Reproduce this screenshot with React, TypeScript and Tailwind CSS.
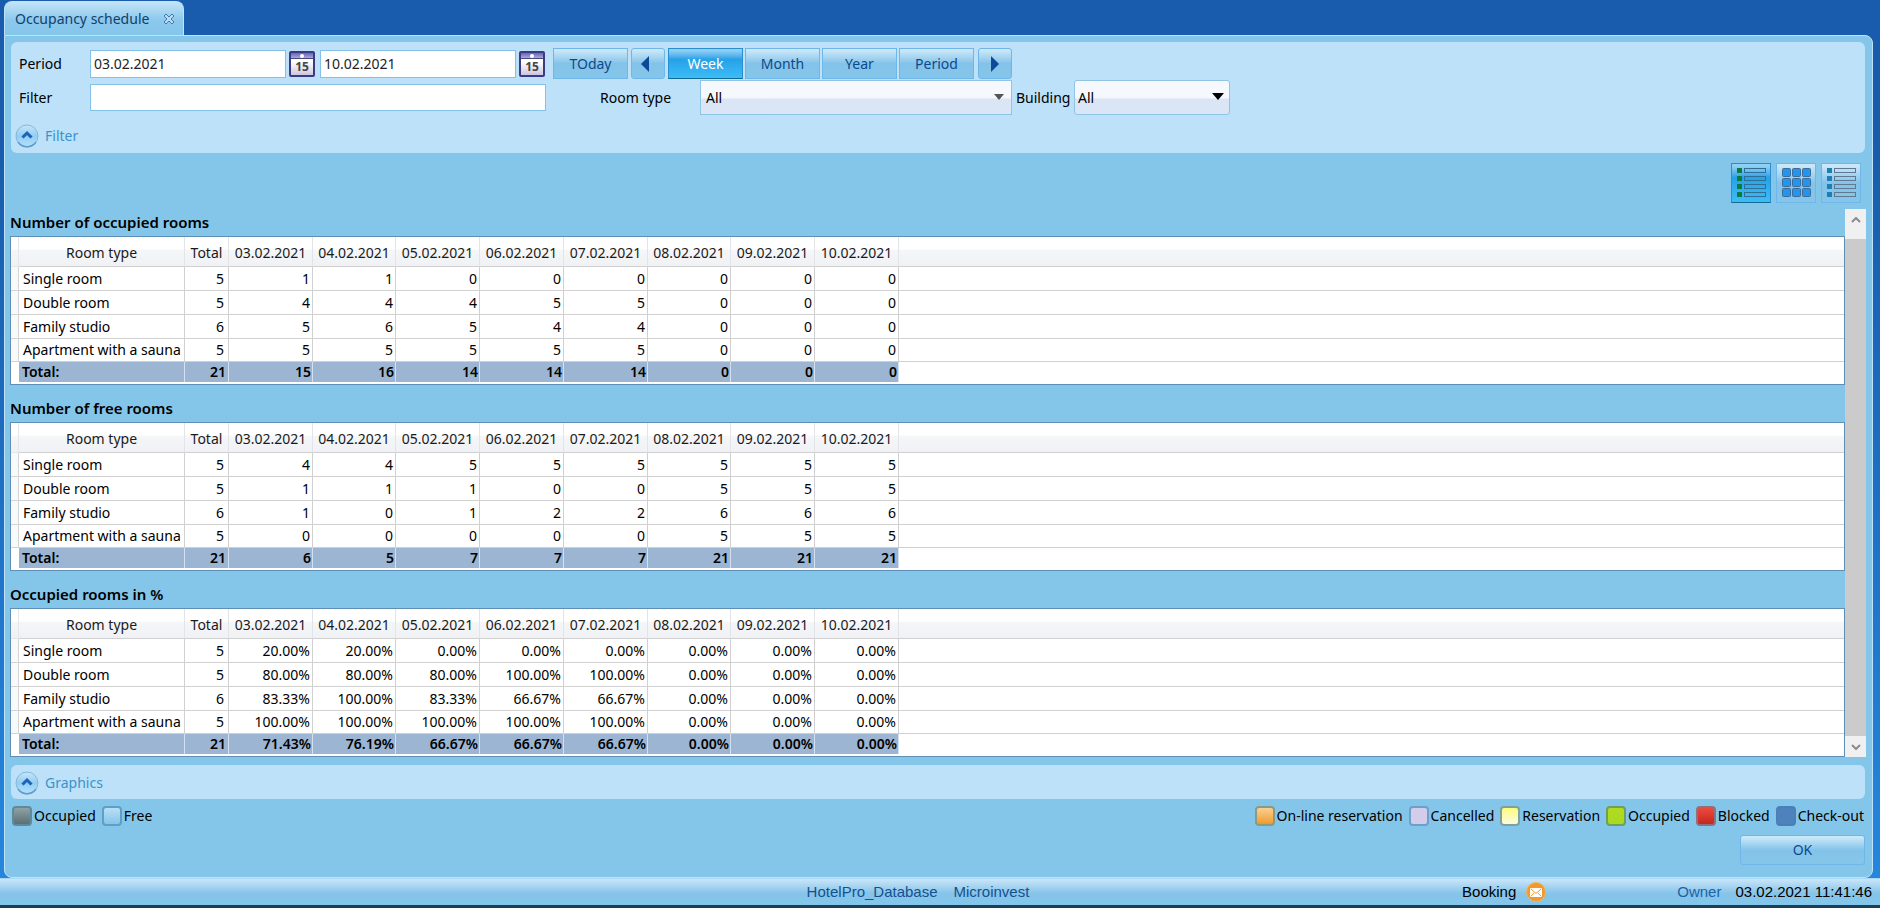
import { useState, type ReactNode } from "react";
import { clsx } from "clsx";

const dates = [
  "03.02.2021",
  "04.02.2021",
  "05.02.2021",
  "06.02.2021",
  "07.02.2021",
  "08.02.2021",
  "09.02.2021",
  "10.02.2021",
];

type Row = { name: string; total: number; values: string[] };

const sections: { title: string; rows: Row[]; totals: string[] }[] = [
  {
    title: "Number of occupied rooms",
    rows: [
      { name: "Single room", total: 5, values: ["1", "1", "0", "0", "0", "0", "0", "0"] },
      { name: "Double room", total: 5, values: ["4", "4", "4", "5", "5", "0", "0", "0"] },
      { name: "Family studio", total: 6, values: ["5", "6", "5", "4", "4", "0", "0", "0"] },
      { name: "Apartment with a sauna", total: 5, values: ["5", "5", "5", "5", "5", "0", "0", "0"] },
    ],
    totals: ["15", "16", "14", "14", "14", "0", "0", "0"],
  },
  {
    title: "Number of free rooms",
    rows: [
      { name: "Single room", total: 5, values: ["4", "4", "5", "5", "5", "5", "5", "5"] },
      { name: "Double room", total: 5, values: ["1", "1", "1", "0", "0", "5", "5", "5"] },
      { name: "Family studio", total: 6, values: ["1", "0", "1", "2", "2", "6", "6", "6"] },
      { name: "Apartment with a sauna", total: 5, values: ["0", "0", "0", "0", "0", "5", "5", "5"] },
    ],
    totals: ["6", "5", "7", "7", "7", "21", "21", "21"],
  },
  {
    title: "Occupied rooms in %",
    rows: [
      { name: "Single room", total: 5, values: ["20.00%", "20.00%", "0.00%", "0.00%", "0.00%", "0.00%", "0.00%", "0.00%"] },
      { name: "Double room", total: 5, values: ["80.00%", "80.00%", "80.00%", "100.00%", "100.00%", "0.00%", "0.00%", "0.00%"] },
      { name: "Family studio", total: 6, values: ["83.33%", "100.00%", "83.33%", "66.67%", "66.67%", "0.00%", "0.00%", "0.00%"] },
      { name: "Apartment with a sauna", total: 5, values: ["100.00%", "100.00%", "100.00%", "100.00%", "100.00%", "0.00%", "0.00%", "0.00%"] },
    ],
    totals: ["71.43%", "76.19%", "66.67%", "66.67%", "66.67%", "0.00%", "0.00%", "0.00%"],
  },
];

const roomLegend = [
  { label: "Occupied", swatch: "border-[#5d8b9c] from-[#8fa3a6] to-[#5a7074]" },
  { label: "Free", swatch: "border-[#5f9fc6] from-[#b9dff5] to-[#84c5ea]" },
];

const statusLegend = [
  { label: "On-line reservation", swatch: "border-[#8a9a86] from-[#f8d092] to-[#f09a1c]" },
  { label: "Cancelled", swatch: "border-[#6f9fcb] from-[#d3cdec] to-[#d3cdec]" },
  { label: "Reservation", swatch: "border-[#7fa0a0] from-[#fdfb7c] to-[#fbfbdc]" },
  { label: "Occupied", swatch: "border-[#6f9f5e] from-[#b0dc20] to-[#a9d920]" },
  { label: "Blocked", swatch: "border-[#8f6f80] from-[#ee4a3e] to-[#c3271d]" },
  { label: "Check-out", swatch: "border-[#4a80b8] from-[#4d82bd] to-[#4d82bd]" },
];

const ranges = ["Week", "Month", "Year", "Period"];

const glossy =
  "border border-[#6fb6ea] bg-linear-to-b from-[#c9e7f9] from-5% via-[#84c3e9] via-50% to-[#84c6ea] text-[#0d4a8c]";
const glossyActive =
  "border border-[#2a8fd0] border-b-[#0f6a94] bg-linear-to-b from-[#8fd0f5] from-5% via-[#25a2e8] via-35% to-[#3dbcf6] text-white";
const field =
  "border border-[#84c1e8] bg-white px-[3px] text-[#222] outline-none";

function CalendarButton({ label }: { label: string }) {
  return (
    <button type="button" aria-label={label} className="h-[26px] w-[26px] shrink-0">
      <svg viewBox="0 0 26 26" className="h-full w-full">
        <defs>
          <linearGradient id="calTop" x1="0" y1="0" x2="0" y2="1">
            <stop offset="0" stopColor="#6a66b4" />
            <stop offset="1" stopColor="#a9a6e2" />
          </linearGradient>
          <linearGradient id="calPage" x1="0" y1="0" x2="0" y2="1">
            <stop offset="0.4" stopColor="#ffffff" />
            <stop offset="1" stopColor="#c9c2de" />
          </linearGradient>
        </defs>
        <rect x="1" y="1" width="24" height="24" rx="1" fill="url(#calPage)" stroke="#3a3a86" strokeWidth="2" />
        <rect x="2" y="2" width="22" height="5" fill="url(#calTop)" />
        <rect x="2" y="7" width="22" height="1" fill="#4a4a7a" />
        <circle cx="13" cy="5" r="2" fill="#fff" />
        <text x="13" y="20" textAnchor="middle" fontSize="12" fontWeight="700" fontFamily="Noto Sans, sans-serif" fill="#444">
          15
        </text>
      </svg>
    </button>
  );
}

function Expander({ label }: { label: string }) {
  return (
    <button type="button" className="flex items-center gap-[6px] text-[#3b93cc]">
      <svg viewBox="0 0 24 24" className="h-6 w-6">
        <defs>
          <linearGradient id="expander" x1="0" y1="0" x2="0" y2="1">
            <stop offset="0" stopColor="#c6e6fa" />
            <stop offset="0.5" stopColor="#93cdf2" />
            <stop offset="1" stopColor="#b4e2fc" />
          </linearGradient>
        </defs>
        <circle cx="12" cy="12" r="11" fill="url(#expander)" stroke="#84b8dc" />
        <path d="M3 18a11 11 0 0 0 18 0" fill="none" stroke="#5f9cc8" strokeWidth="1.5" />
        <path d="M7.5 13.5 12 9l4.5 4.5" fill="none" stroke="#1c62b6" strokeWidth="3" />
      </svg>
      {label}
    </button>
  );
}

function ListIcon({ marker, line }: { marker: string; line: string }) {
  return (
    <svg viewBox="0 0 30 30" className="h-[30px] w-[30px]">
      {[1, 9, 17, 25].map((y) => (
        <g key={y}>
          <rect x="1" y={y - 1} width="5" height="5" fill={marker} />
          <rect x="8.5" y={y - 0.5} width="21" height="4" fill="none" stroke={line} />
        </g>
      ))}
    </svg>
  );
}

function GridIcon() {
  return (
    <svg viewBox="0 0 30 30" className="h-[30px] w-[30px]">
      {[0, 10, 20].map((y) =>
        [1, 11, 21].map((x) => (
          <rect key={`${x}-${y}`} x={x + 0.5} y={y + 0.5} width="8" height="8" rx="1" fill="#2196f0" stroke="#3f6c96" />
        ))
      )}
    </svg>
  );
}

function ViewButton({ label, active, children }: { label: string; active?: boolean; children: ReactNode }) {
  return (
    <button
      type="button"
      aria-label={label}
      aria-pressed={!!active}
      className={clsx("flex h-10 w-10 items-center justify-center", active ? glossyActive : glossy)}
    >
      {children}
    </button>
  );
}

function OccupancyTable({ title, rows, totals }: { title: string; rows: Row[]; totals: string[] }) {
  return (
    <section>
      <h2 className="h-[27px] text-[15px] leading-[27px] font-semibold text-black">{title}</h2>
      <div className="border border-[#5f8fb4] bg-white pb-[2px]">
        <table className="w-full table-fixed border-separate border-spacing-0 text-[14px]" aria-label={title}>
          <colgroup>
            <col className="w-[8px]" />
            <col className="w-[166px]" />
            <col className="w-[44px]" />
            {dates.map((d, i) => (
              <col key={d} className={i % 4 === 1 ? "w-[83px]" : "w-[84px]"} />
            ))}
            <col />
          </colgroup>
          <thead>
            <tr className="h-[30px] bg-linear-to-b from-white from-40% via-[#f5f6f8] via-45% to-[#eff1f4]">
              <td className="border-r border-b border-[#e4e6ea]" />
              {["Room type", "Total", ...dates].map((h) => (
                <th key={h} scope="col" className="border-r border-b border-r-[#e2e4e8] border-b-[#d0d0d0] p-0 pt-[2px] text-center font-normal text-[#1a1a1a]">
                  {h}
                </th>
              ))}
              <td className="border-b border-[#d0d0d0]" />
            </tr>
          </thead>
          <tbody>
            {rows.map((row) => (
              <tr key={row.name} className="h-6 last:h-[23px]">
                <td className="border-r border-b border-[#d4d4d4] bg-[#f8f9fb]" />
                <th scope="row" className="border-r border-b border-[#d0d0d0] p-0 pl-[4px] text-left font-normal whitespace-nowrap text-black">
                  {row.name}
                </th>
                <td className="border-r border-b border-[#d0d0d0] p-0 pr-[4px] text-right">{row.total}</td>
                {row.values.map((v, i) => (
                  <td key={dates[i]} className="border-r border-b border-[#d0d0d0] p-0 pr-[2px] text-right">
                    {v}
                  </td>
                ))}
                <td className="border-b border-[#d0d0d0]" />
              </tr>
            ))}
          </tbody>
          <tfoot>
            <tr className="h-5 leading-5 font-semibold text-black">
              <td />
              <th scope="row" className="border-r border-[#d5e0ee] bg-[#9bb5d3] p-0 pl-[3px] text-left font-semibold">
                Total:
              </th>
              <td className="border-r border-[#d5e0ee] bg-[#9bb5d3] p-0 pr-[2px] text-right">21</td>
              {totals.map((v, i) => (
                <td key={dates[i]} className="border-r border-[#d5e0ee] bg-[#9bb5d3] p-0 pr-px text-right">
                  {v}
                </td>
              ))}
              <td />
            </tr>
          </tfoot>
        </table>
      </div>
    </section>
  );
}

function Legend({ items }: { items: { label: string; swatch: string }[] }) {
  return (
    <ul className="flex items-center gap-[6px]">
      {items.map((item) => (
        <li key={item.label} className="flex items-center gap-[2px]">
          <span className={clsx("h-5 w-5 rounded-[4px] border-2 bg-linear-to-b", item.swatch)} />
          {item.label}
        </li>
      ))}
    </ul>
  );
}

function StatusBar() {
  return (
    <footer className="border-b-[3px] border-[#1d3f55] font-['Liberation_Sans',Arial,sans-serif] text-[15px]">
      <div className="grid h-[27px] grid-cols-[1fr_auto_1fr] items-center border-t border-[#a9d6f2] bg-linear-to-b from-[#c8e6f9] via-[#86c4e9] via-55% to-[#84c6ec] px-2">
        <span />
        <div className="flex gap-4 pr-[44px] text-[#15508f]">
          <span>HotelPro_Database</span>
          <span>Microinvest</span>
        </div>
        <div className="flex items-center justify-end">
          <span className="text-black">Booking</span>
          <svg viewBox="0 0 22 20" className="mr-[130px] ml-[9px] h-5 w-[22px]">
            <circle cx="11" cy="10" r="9.5" fill="#f09a2c" stroke="#f7b45c" />
            <rect x="5" y="6" width="12" height="9" rx="1" fill="#fff" />
            <path d="m6 7 5 4.5L16 7M6 14l3.5-3.5M16 14l-3.5-3.5" fill="none" stroke="#f09a2c" />
          </svg>
          <span className="mr-[14px] text-[#1d62ab]">Owner</span>
          <time className="text-black">03.02.2021 11:41:46</time>
        </div>
      </div>
    </footer>
  );
}

export default function App() {
  const [range, setRange] = useState("Week");

  return (
    <div className="flex min-h-screen flex-col bg-linear-to-b from-[#195bac] from-15% to-[#2588e0] font-['Noto_Sans','Open_Sans',sans-serif] text-[14px] leading-5 text-black">
      <div className="flex pt-px pl-[4px]">
        <div className="flex h-[34px] w-[180px] items-center justify-between rounded-t-[8px] border border-b-0 border-[#bfe3f8] bg-linear-to-b from-[#c3e4f8] via-[#8bc8ec] via-55% to-[#84c6ea] pr-[8px] pl-[10px] text-[#10406e]">
          Occupancy schedule
          <button type="button" aria-label="Close tab">
            <svg viewBox="0 0 12 12" className="h-3 w-3">
              <path
                d="M1 3 3 1l3 3 3-3 2 2-3 3 3 3-2 2-3-3-3 3-2-2 3-3z"
                fill="#b5dcf4"
                stroke="#3f7cab"
              />
            </svg>
          </button>
        </div>
      </div>

      <main className="mr-[7px] ml-[4px] flex flex-1 flex-col rounded-b-[8px] rounded-tr-[8px] border border-[#bfe3f8] bg-[#84c6ea] pr-[7px] pl-[5px]">
        <div className="mt-[6px] ml-px flex h-[111px] flex-col rounded-[6px] bg-[#bde1f8] pl-[8px]">
          <div className="flex h-[38px] items-center pt-[5px]">
            <label htmlFor="from" className="w-[71px]">Period</label>
            <input id="from" defaultValue="03.02.2021" className={clsx(field, "mr-[3px] h-7 w-[196px]")} />
            <CalendarButton label="Pick start date" />
            <input aria-label="Period end" defaultValue="10.02.2021" className={clsx(field, "mr-[3px] ml-[5px] h-7 w-[196px]")} />
            <CalendarButton label="Pick end date" />
            <div className="ml-[8px] flex gap-[3px]">
              <button type="button" className={clsx(glossy, "h-[31px] w-[75px]")}>TOday</button>
              <button type="button" aria-label="Previous" className={clsx(glossy, "flex h-[31px] w-[34px] items-center justify-center rounded-[3px] pr-[6px]")}>
                <svg viewBox="0 0 8 16" className="h-4 w-2"><path d="M8 0v16L0 8z" fill="#0b4a96" /></svg>
              </button>
              <div className="flex gap-[2px] pr-px">
                {ranges.map((r) => (
                  <button
                    key={r}
                    type="button"
                    aria-pressed={range === r}
                    onClick={() => setRange(r)}
                    className={clsx("h-[31px] w-[75px]", range === r ? glossyActive : glossy)}
                  >
                    {r}
                  </button>
                ))}
              </div>
              <button type="button" aria-label="Next" className={clsx(glossy, "flex h-[31px] w-[34px] items-center justify-center rounded-[3px]")}>
                <svg viewBox="0 0 8 16" className="h-4 w-2"><path d="M0 0v16l8-8z" fill="#0b4a96" /></svg>
              </button>
            </div>
          </div>

          <div className="flex h-[35px] items-center">
            <label htmlFor="filter" className="w-[71px]">Filter</label>
            <input id="filter" className={clsx(field, "h-[27px] w-[456px]")} />
            <label htmlFor="roomType" className="ml-[54px] w-[100px]">Room type</label>
            <div className="relative">
              <select id="roomType" className="h-[35px] w-[312px] appearance-none border border-[#8fc4e6] bg-linear-to-b from-[#f5f9fe] from-50% to-[#dae6f5] to-55% pl-[5px]">
                <option>All</option>
              </select>
              <svg viewBox="0 0 10 6" className="pointer-events-none absolute top-[14px] right-[8px] h-[6px] w-[10px]">
                <path d="M0 0h10L5 6z" fill="#555" />
              </svg>
            </div>
            <label htmlFor="building" className="w-[62px] pl-[4px]">Building</label>
            <div className="relative">
              <select id="building" className="h-[35px] w-[156px] appearance-none rounded-[3px] border border-[#8fc4e6] bg-linear-to-b from-[#f5f9fe] from-50% to-[#dae6f5] to-55% pl-[3px]">
                <option>All</option>
              </select>
              <svg viewBox="0 0 12 7" className="pointer-events-none absolute top-[13px] right-[6px] h-[7px] w-3">
                <path d="M0 0h12L6 7z" fill="#000" />
              </svg>
            </div>
          </div>

          <div className="-ml-[4px] flex flex-1 items-center pt-[3px]">
            <Expander label="Filter" />
          </div>
        </div>

        <div className="mt-[10px] flex justify-end gap-[5px] pr-[4px]">
          <ViewButton label="Detailed list" active>
            <ListIcon marker="#0f7a3a" line="#2f6f96" />
          </ViewButton>
          <ViewButton label="Grid">
            <GridIcon />
          </ViewButton>
          <ViewButton label="List">
            <ListIcon marker="#1f7fb4" line="#5f7a90" />
          </ViewButton>
        </div>

        <div className="mt-[6px] flex">
          <div className="flex flex-1 flex-col gap-[10px]">
            {sections.map((s) => (
              <OccupancyTable key={s.title} {...s} />
            ))}
          </div>
          <div className="-mr-px flex w-[21px] flex-col bg-[#cbcbcb]">
            <button type="button" aria-label="Scroll up" className="flex h-[30px] items-center justify-center bg-[#f0f0f0] pb-[8px]">
              <svg viewBox="0 0 10 6" className="h-[6px] w-[10px]"><path d="m1 5 4-4 4 4" fill="none" stroke="#8a8a8a" strokeWidth="2" /></svg>
            </button>
            <div className="flex-1" />
            <button type="button" aria-label="Scroll down" className="flex h-[21px] items-center justify-center bg-[#f0f0f0]">
              <svg viewBox="0 0 10 6" className="h-[6px] w-[10px]"><path d="m1 1 4 4 4-4" fill="none" stroke="#8a8a8a" strokeWidth="2" /></svg>
            </button>
          </div>
        </div>

        <div className="mt-[8px] ml-px flex h-[34px] items-center rounded-[6px] bg-[#bde1f8] pt-[2px] pl-[4px]">
          <Expander label="Graphics" />
        </div>

        <div className="mt-[7px] flex justify-between pr-px pl-[2px]">
          <Legend items={roomLegend} />
          <Legend items={statusLegend} />
        </div>

        <div className="mt-[9px] mb-[9px] flex justify-end">
          <button type="button" className={clsx(glossy, "h-[30px] w-[125px] rounded-[3px]")}>OK</button>
        </div>
      </main>

      <StatusBar />
    </div>
  );
}
